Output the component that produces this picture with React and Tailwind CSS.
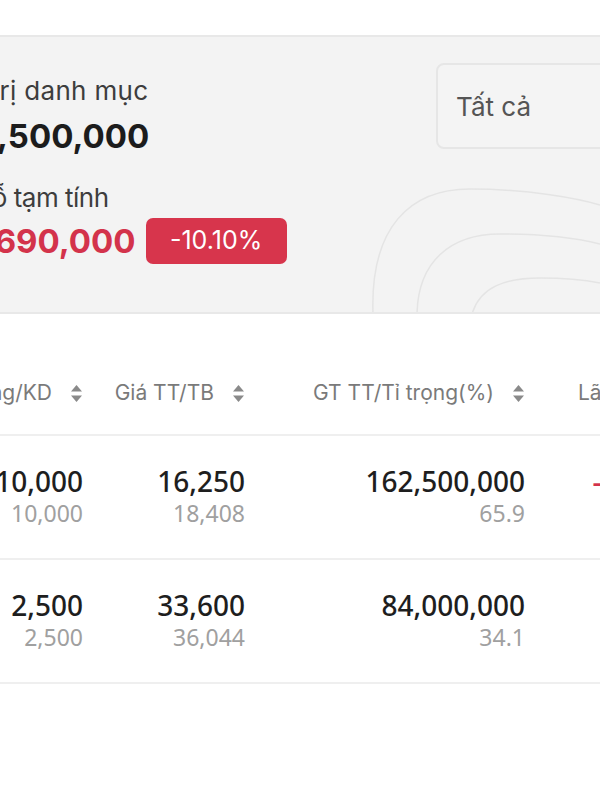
import React from "react";

const rows = [
  { qty: "10,000", qtySub: "10,000", price: "16,250", priceSub: "18,408", value: "162,500,000", weight: "65.9", pnl: "-21,580,000" },
  { qty: "2,500", qtySub: "2,500", price: "33,600", priceSub: "36,044", value: "84,000,000", weight: "34.1", pnl: "-6,110,000" },
];

function SortIcon() {
  return (
    <svg width="13" height="19" viewBox="0 0 13 19" className="shrink-0">
      <path d="M6.5 1 L12 7.5 H1 Z" fill="#8a8a8a" />
      <path d="M6.5 18 L12 11.5 H1 Z" fill="#8a8a8a" />
    </svg>
  );
}

function HeaderCell({ label, className }) {
  return (
    <div className={`flex items-center justify-end gap-[18px] shrink-0 whitespace-nowrap ${className}`}>
      <span>{label}</span>
      <SortIcon />
    </div>
  );
}

export default function App() {
  return (
    <div className="w-[600px] h-[800px] overflow-hidden bg-white font-['Inter',sans-serif]">
      {/* summary panel */}
      <div className="relative mt-[35px] h-[279px] border-y-2 border-[#e8e8e8] bg-[#f3f3f3] overflow-hidden">
        <svg className="absolute inset-0" width="600" height="277" viewBox="0 0 600 277" fill="none">
          <path d="M373 277 C370 190 410 152 470 152 C530 152 580 162 600 168" stroke="#e4e4e4" strokeWidth="1.5" />
          <path d="M417 277 C418 225 450 197 500 197 C550 197 580 202 600 207" stroke="#e4e4e4" strokeWidth="1.5" />
          <path d="M472 277 C480 250 505 241 540 241 C570 241 590 244 600 246" stroke="#e4e4e4" strokeWidth="1.5" />
        </svg>
        <div className="relative flex">
          <div className="w-[436px] shrink-0 pt-[38px] whitespace-nowrap">
            <div className="-ml-[58px] text-[26px] leading-[32px] tracking-[0.3px] text-[#3d3d3d]">Giá trị danh mục</div>
            <div className="-ml-[66px] mt-[9px] text-[33px] leading-[40px] font-bold text-[#1c1c1c]">246,500,000</div>
            <div className="-ml-[57px] mt-[26px] text-[26px] leading-[32px] tracking-[-0.5px] text-[#3d3d3d]">Lãi/lỗ tạm tính</div>
            <div className="-ml-[66px] mt-[4px] flex items-center gap-[10px]">
              <span className="text-[33px] leading-[40px] font-bold text-[#d3334b]">-27,690,000</span>
              <span className="h-[46px] w-[141px] rounded-[7px] bg-[#d7354c] text-white text-[25px] flex items-center justify-center">-10.10%</span>
            </div>
          </div>
          <div className="mt-[26px] h-[86px] w-[220px] shrink-0 rounded-[8px] border-2 border-[#e6e6e6] bg-[#f4f4f4] flex items-center pl-[18px] text-[26px] text-[#555]">
            Tất cả
          </div>
        </div>
      </div>

      {/* table */}
      <div className="mt-[38px] h-[84px] flex items-center border-b-2 border-[#efefef] text-[21px] text-[#7a7a7a]">
        <HeaderCell label="KL Tổng/KD" className="w-[83px]" />
        <HeaderCell label="Giá TT/TB" className="w-[162px]" />
        <HeaderCell label="GT TT/Tỉ trọng(%)" className="w-[280px]" />
        <div className="pl-[53px] shrink-0 whitespace-nowrap">Lãi/Lỗ tạm tính</div>
      </div>
      {rows.map((r) => (
        <div key={r.value} className="h-[124px] flex items-center border-b-2 border-[#efefef] font-['Noto_Sans',sans-serif] whitespace-nowrap">
          {[
            [r.qty, r.qtySub, "w-[83px]"],
            [r.price, r.priceSub, "w-[162px]"],
            [r.value, r.weight, "w-[280px]"],
          ].map(([main, sub, w]) => (
            <div key={main + w} className={`${w} shrink-0 flex flex-col items-end`}>
              <span className="text-[28px] leading-[32px] font-medium text-[#1e1e1e]">{main}</span>
              <span className="text-[23px] leading-[32px] text-[#a0a0a0]">{sub}</span>
            </div>
          ))}
          <div className="w-[220px] shrink-0 flex flex-col items-end">
            <span className="text-[28px] leading-[32px] font-medium text-[#d3334b]">{r.pnl}</span>
            <span className="text-[23px] leading-[32px]">&nbsp;</span>
          </div>
        </div>
      ))}
    </div>
  );
}
